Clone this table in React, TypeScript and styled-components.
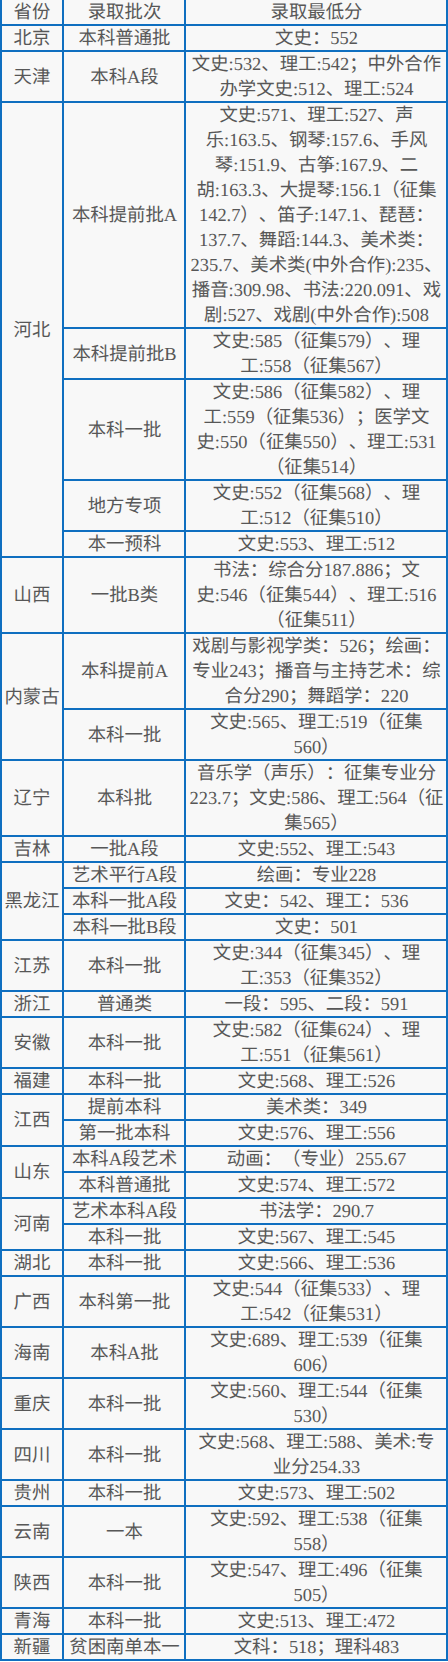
import React from "react";
import styled, { createGlobalStyle } from "styled-components";

const GlobalStyle = createGlobalStyle`
  html, body {
    margin: 0;
    padding: 0;
    background: #ffffff;
  }
`;

const LINE = "#0f6fc0";

const Table = styled.table`
  width: 447px;
  table-layout: fixed;
  border-collapse: collapse;
  background: #f8f8f8;
  color: #575757;
  font-family: "Liberation Serif", "Noto Sans CJK SC", serif;
  font-size: 18.4px;
  line-height: 25px;
  text-rendering: geometricPrecision;
  text-spacing-trim: space-all;
  border-bottom: 1px solid ${LINE};
`;

const Col = styled.col<{ $w: number }>`
  width: ${(p) => p.$w}px;
`;

const HeadCell = styled.th<{ $edge?: boolean }>`
  font-weight: normal;
  text-align: center;
  padding: 0;
  border: 1px solid ${LINE};
  border-top: none;
  box-shadow: inset -1px -1px 0 ${LINE}${(p) => (p.$edge ? `, inset 1px 0 0 ${LINE}` : "")};
`;

const Cell = styled.td<{ $edge?: boolean }>`
  text-align: center;
  vertical-align: middle;
  padding: 0;
  border: 1px solid ${LINE};
  box-shadow: inset -1px -1px 0 ${LINE}${(p) => (p.$edge ? `, inset 1px 0 0 ${LINE}` : "")};
`;

const ScoreText = styled.span`
  display: block;
  width: 254.3px;
  margin: 0 auto;
  text-align: center;
`;

type Entry = [string, string];
type Province = { name: string; rows: Entry[] };

const data: Province[] = [
  { name: "北京", rows: [["本科普通批", "文史：552"]] },
  { name: "天津", rows: [["本科A段", "文史:532、理工:542；中外合作办学文史:512、理工:524"]] },
  {
    name: "河北",
    rows: [
      [
        "本科提前批A",
        "文史:571、理工:527、声乐:163.5、钢琴:157.6、手风琴:151.9、古筝:167.9、二胡:163.3、大提琴:156.1（征集142.7）、笛子:147.1、琵琶：137.7、舞蹈:144.3、美术类：235.7、美术类(中外合作):235、播音:309.98、书法:220.091、戏剧:527、戏剧(中外合作):508",
      ],
      ["本科提前批B", "文史:585（征集579）、理工:558（征集567）"],
      ["本科一批", "文史:586（征集582）、理工:559（征集536）；医学文史:550（征集550）、理工:531（征集514）"],
      ["地方专项", "文史:552（征集568）、理工:512（征集510）"],
      ["本一预科", "文史:553、理工:512"],
    ],
  },
  { name: "山西", rows: [["一批B类", "书法：综合分187.886；文史:546（征集544）、理工:516（征集511）"]] },
  {
    name: "内蒙古",
    rows: [
      ["本科提前A", "戏剧与影视学类：526；绘画：专业243；播音与主持艺术：综合分290；舞蹈学：220"],
      ["本科一批", "文史:565、理工:519（征集560）"],
    ],
  },
  { name: "辽宁", rows: [["本科批", "音乐学（声乐）：征集专业分223.7；文史:586、理工:564（征集565）"]] },
  { name: "吉林", rows: [["一批A段", "文史:552、理工:543"]] },
  {
    name: "黑龙江",
    rows: [
      ["艺术平行A段", "绘画：专业228"],
      ["本科一批A段", "文史：542、理工：536"],
      ["本科一批B段", "文史：501"],
    ],
  },
  { name: "江苏", rows: [["本科一批", "文史:344（征集345）、理工:353（征集352）"]] },
  { name: "浙江", rows: [["普通类", "一段：595、二段：591"]] },
  { name: "安徽", rows: [["本科一批", "文史:582（征集624）、理工:551（征集561）"]] },
  { name: "福建", rows: [["本科一批", "文史:568、理工:526"]] },
  {
    name: "江西",
    rows: [
      ["提前本科", "美术类：349"],
      ["第一批本科", "文史:576、理工:556"],
    ],
  },
  {
    name: "山东",
    rows: [
      ["本科A段艺术", "动画：（专业）255.67"],
      ["本科普通批", "文史:574、理工:572"],
    ],
  },
  {
    name: "河南",
    rows: [
      ["艺术本科A段", "书法学：290.7"],
      ["本科一批", "文史:567、理工:545"],
    ],
  },
  { name: "湖北", rows: [["本科一批", "文史:566、理工:536"]] },
  { name: "广西", rows: [["本科第一批", "文史:544（征集533）、理工:542（征集531）"]] },
  { name: "海南", rows: [["本科A批", "文史:689、理工:539（征集606）"]] },
  { name: "重庆", rows: [["本科一批", "文史:560、理工:544（征集530）"]] },
  { name: "四川", rows: [["本科一批", "文史:568、理工:588、美术:专业分254.33"]] },
  { name: "贵州", rows: [["本科一批", "文史:573、理工:502"]] },
  { name: "云南", rows: [["一本", "文史:592、理工:538（征集558）"]] },
  { name: "陕西", rows: [["本科一批", "文史:547、理工:496（征集505）"]] },
  { name: "青海", rows: [["本科一批", "文史:513、理工:472"]] },
  { name: "新疆", rows: [["贫困南单本一", "文科：518；理科483"]] },
];

export default function App() {
  return (
    <>
      <GlobalStyle />
      <Table>
        <colgroup>
          <Col $w={63} />
          <Col $w={122} />
          <Col $w={262} />
        </colgroup>
        <thead>
          <tr>
            <HeadCell $edge>省份</HeadCell>
            <HeadCell>录取批次</HeadCell>
            <HeadCell>录取最低分</HeadCell>
          </tr>
        </thead>
        <tbody>
          {data.map((p) =>
            p.rows.map(([batch, score], i) => (
              <tr key={p.name + i}>
                {i === 0 && (
                  <Cell $edge rowSpan={p.rows.length}>
                    {p.name}
                  </Cell>
                )}
                <Cell>{batch}</Cell>
                <Cell>
                  <ScoreText>{score}</ScoreText>
                </Cell>
              </tr>
            ))
          )}
        </tbody>
      </Table>
    </>
  );
}
